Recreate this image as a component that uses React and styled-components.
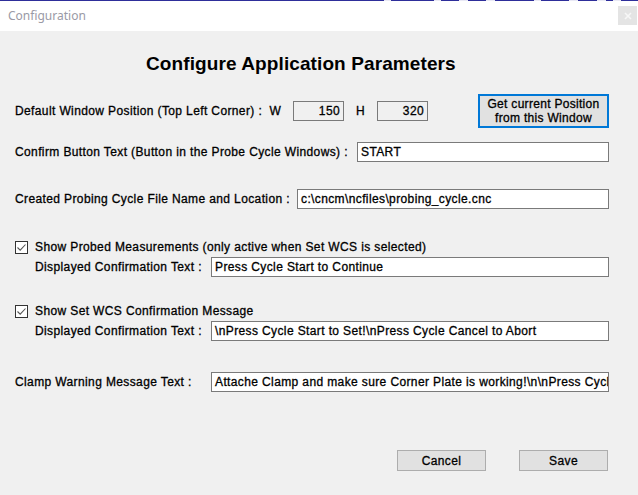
import React from "react";
import styled, { createGlobalStyle } from "styled-components";

const Global = createGlobalStyle`
  html, body { margin: 0; padding: 0; background: #f0f0f0; }
  body { font-family: "Liberation Sans", Arial, sans-serif; }
  * { box-sizing: border-box; }
`;

const Window = styled.div`
  width: 638px;
  height: 495px;
  background: #f0f0f0;
  display: flex;
  flex-direction: column;
  overflow: hidden;
`;

const TitleBar = styled.div`
  position: relative;
  height: 31px;
  background: #ffffff;
  display: flex;
  align-items: center;
  justify-content: space-between;
  padding: 0 0 0 8px;
  flex-shrink: 0;
  &::before {
    content: "";
    position: absolute;
    left: 0;
    top: 0;
    width: 100%;
    height: 1px;
    background: linear-gradient(
      to right,
      #2e2e9a 0px, #2e2e9a 384px, #e8e8f4 384px, #e8e8f4 391px,
      #2e2e9a 391px, #2e2e9a 434px, #e8e8f4 434px, #e8e8f4 441px,
      #2e2e9a 441px, #2e2e9a 459px, #e8e8f4 459px, #e8e8f4 468px,
      #2e2e9a 468px, #2e2e9a 486px, #e8e8f4 486px, #e8e8f4 495px,
      #2e2e9a 495px, #2e2e9a 534px, #e8e8f4 534px, #e8e8f4 541px,
      #2e2e9a 541px, #2e2e9a 569px, #e8e8f4 569px, #e8e8f4 578px,
      #2e2e9a 578px, #2e2e9a 597px, #e8e8f4 597px, #e8e8f4 606px,
      #2e2e9a 606px, #2e2e9a 613px, #e8e8f4 613px, #e8e8f4 621px,
      #2e2e9a 621px
    );
  }
`;

const TitleText = styled.span`
  font-family: "Noto Sans", "Liberation Sans", sans-serif;
  font-size: 12px;
  color: #9a9aa6;
`;

const CloseBtn = styled.div`
  width: 19px;
  height: 19px;
  margin-right: 1px;
  background: #e4e4e4;
  display: flex;
  align-items: center;
  justify-content: center;
`;

const Body = styled.div`
  display: flex;
  flex-direction: column;
  padding: 0 29px 0 15px;
`;

const Heading = styled.h1`
  margin: 21px 0 0 131px;
  height: 24px;
  line-height: 24px;
  font-size: 19px;
  font-weight: bold;
  color: #000;
  white-space: nowrap;
  letter-spacing: 0.1px;
`;

const Row = styled.div`
  display: flex;
  align-items: center;
  height: ${(p) => p.$h || 20}px;
  margin-top: ${(p) => p.$mt || 0}px;
  padding-left: ${(p) => p.$indent || 0}px;
`;

const Label = styled.span`
  font-size: 12px;
  letter-spacing: 0.38px;
  color: #000;
  white-space: nowrap;
  flex-shrink: 0;
  width: ${(p) => (p.$w ? `${p.$w}px` : "auto")};
  text-align: ${(p) => (p.$center ? "center" : "left")};
  -webkit-text-stroke: 0.3px #000;
`;

const Field = styled.div`
  height: 20px;
  border: 1px solid #7a7a7a;
  background: ${(p) => (p.$readonly ? "#f0f0f0" : "#ffffff")};
  font-size: 12px;
  letter-spacing: 0.38px;
  line-height: 18px;
  color: #000;
  padding: 0 ${(p) => (p.$right ? 3 : 2)}px 0 3px;
  white-space: nowrap;
  overflow: hidden;
  text-align: ${(p) => (p.$right ? "right" : "left")};
  width: ${(p) => (p.$w ? `${p.$w}px` : "auto")};
  flex: ${(p) => (p.$w ? "0 0 auto" : "1 1 auto")};
  min-width: 0;
  -webkit-text-stroke: 0.3px #000;
`;

const PosButton = styled.button`
  margin-left: auto;
  width: 131px;
  height: 34px;
  border: 2px solid #0078d7;
  background: #e1e1e1;
  font-family: "Liberation Sans", Arial, sans-serif;
  font-size: 12px;
  letter-spacing: 0.3px;
  line-height: 14px;
  color: #000;
  padding: 0;
  -webkit-text-stroke: 0.3px #000;
`;

const Box = styled.span`
  width: 13px;
  height: 13px;
  border: 1px solid #333;
  background: #fff;
  margin-right: 7px;
  display: flex;
  align-items: center;
  justify-content: center;
  flex-shrink: 0;
`;

const Footer = styled.div`
  display: flex;
  justify-content: flex-end;
  gap: 33px;
  margin-top: 58px;
  padding-right: 1px;
`;

const DlgButton = styled.button`
  width: 89px;
  height: 21px;
  border: 1px solid #adadad;
  background: #e1e1e1;
  font-family: "Liberation Sans", Arial, sans-serif;
  font-size: 12px;
  letter-spacing: 0.38px;
  color: #000;
  padding: 0;
  -webkit-text-stroke: 0.3px #000;
`;

function Check() {
  return (
    <Box>
      <svg width="11" height="11" viewBox="0 0 11 11">
        <path d="M1.5 5.5 L4.2 8.2 L9.5 2.5" fill="none" stroke="#555" strokeWidth="1.1" />
      </svg>
    </Box>
  );
}

export default function App() {
  return (
    <>
      <Global />
      <Window>
        <TitleBar>
          <TitleText>Configuration</TitleText>
          <CloseBtn>
            <svg width="8" height="8" viewBox="0 0 8 8">
              <path d="M1 1 L7 7 M7 1 L1 7" stroke="#f7f7f7" strokeWidth="1.6" />
            </svg>
          </CloseBtn>
        </TitleBar>
        <Body>
          <Heading>Configure Application Parameters</Heading>

          <Row $h={34} $mt={18}>
            <Label $w={278}>Default Window Position (Top Left Corner) :&nbsp; W</Label>
            <Field $readonly $right $w={51}>150</Field>
            <Label $w={33} $center>H</Label>
            <Field $readonly $right $w={51}>320</Field>
            <PosButton>
              Get current Position
              <br />
              from this Window
            </PosButton>
          </Row>

          <Row $mt={14}>
            <Label $w={342}>Confirm Button Text (Button in the Probe Cycle Windows) :</Label>
            <Field>START</Field>
          </Row>

          <Row $mt={27}>
            <Label $w={282}>Created Probing Cycle File Name and Location :</Label>
            <Field>c:\cncm\ncfiles\probing_cycle.cnc</Field>
          </Row>

          <Row $mt={28}>
            <Check />
            <Label>Show Probed Measurements (only active when Set WCS is selected)</Label>
          </Row>
          <Row $indent={20}>
            <Label $w={176}>Displayed Confirmation Text :</Label>
            <Field>Press Cycle Start to Continue</Field>
          </Row>

          <Row $mt={24}>
            <Check />
            <Label>Show Set WCS Confirmation Message</Label>
          </Row>
          <Row $indent={20}>
            <Label $w={176}>Displayed Confirmation Text :</Label>
            <Field>\nPress Cycle Start to Set!\nPress Cycle Cancel to Abort</Field>
          </Row>

          <Row $mt={31}>
            <Label $w={196}>Clamp Warning Message Text :</Label>
            <Field>Attache Clamp and make sure Corner Plate is working!\n\nPress Cycle Cancel to Abort</Field>
          </Row>

          <Footer>
            <DlgButton>Cancel</DlgButton>
            <DlgButton>Save</DlgButton>
          </Footer>
        </Body>
      </Window>
    </>
  );
}
